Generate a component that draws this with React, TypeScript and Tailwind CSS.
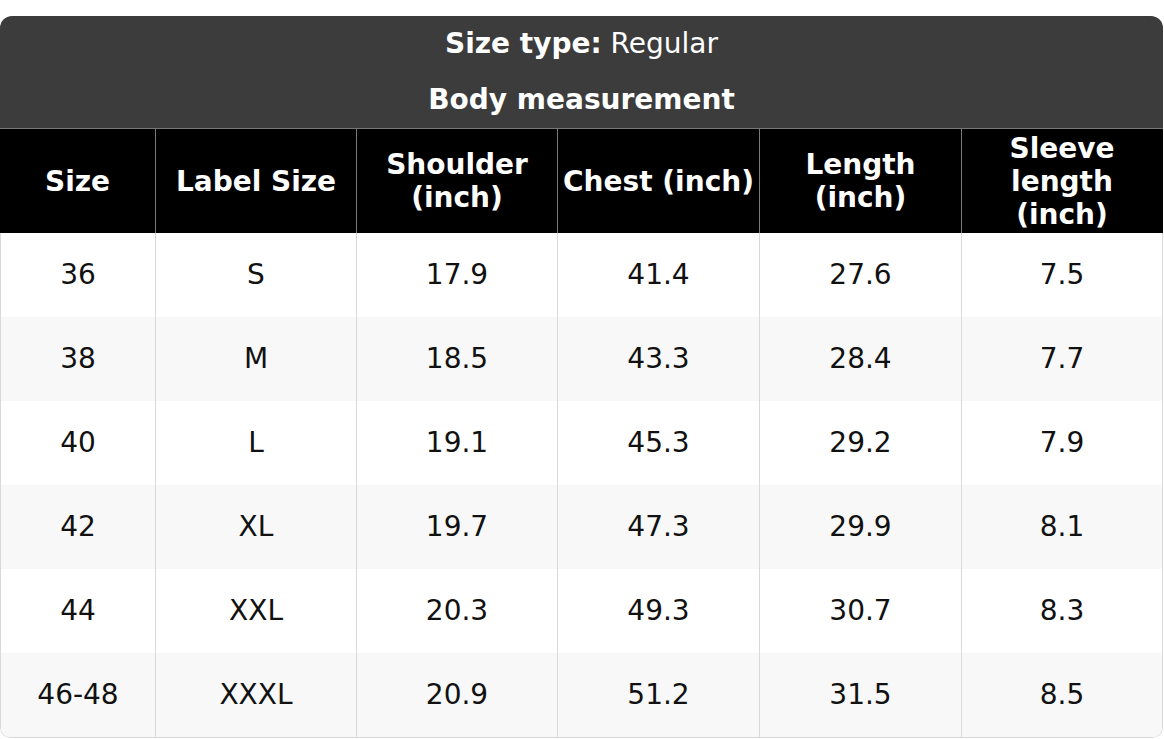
const widths = ["w-[155px]", "w-[201px]", "w-[201px]", "w-[202px]", "w-[202px]", "w-[201px]"];

const headers: string[][] = [
  ["Size"],
  ["Label Size"],
  ["Shoulder", "(inch)"],
  ["Chest (inch)"],
  ["Length", "(inch)"],
  ["Sleeve", "length", "(inch)"],
];

const rows = [
  ["36", "S", "17.9", "41.4", "27.6", "7.5"],
  ["38", "M", "18.5", "43.3", "28.4", "7.7"],
  ["40", "L", "19.1", "45.3", "29.2", "7.9"],
  ["42", "XL", "19.7", "47.3", "29.9", "8.1"],
  ["44", "XXL", "20.3", "49.3", "30.7", "8.3"],
  ["46-48", "XXXL", "20.9", "51.2", "31.5", "8.5"],
];

export default function App() {
  return (
    <div className="min-h-screen bg-white pt-4 font-['DejaVu_Sans',sans-serif] text-[28px]">
      <div className="w-[1163px] overflow-hidden rounded-t-[12px] rounded-b-[10px]">
        {/* title block */}
        <div className="bg-[#3c3c3c] text-white">
          <div className="flex h-[56px] items-center justify-center pb-[2px] leading-[33px]">
            <span className="font-bold">Size type:</span>
            <span>&nbsp;Regular</span>
          </div>
          <div className="flex h-[56px] items-center justify-center pb-[2px] font-bold leading-[33px]">
            Body measurement
          </div>
        </div>

        {/* column headers */}
        <div className="flex h-[105px] border-t border-[#787878] bg-black text-white">
          {headers.map((lines, i) => (
            <div
              key={i}
              className={`${widths[i]} flex shrink-0 flex-col items-center justify-center text-center font-bold leading-[33px] ${
                i > 0 ? "border-l border-[#7a7a7a]" : ""
              }`}
            >
              {lines.map((l) => (
                <span key={l} className="whitespace-nowrap">
                  {l}
                </span>
              ))}
            </div>
          ))}
        </div>

        {/* body */}
        <div className="overflow-hidden rounded-b-[10px] border-x border-b border-[#d9d9d9] text-[#111]">
          {rows.map((r, ri) => (
            <div key={ri} className={`flex h-[84px] ${ri % 2 === 1 ? "bg-[#f8f8f8]" : "bg-white"}`}>
              {r.map((c, ci) => (
                <div
                  key={ci}
                  className={`${ci === 0 ? "w-[154px]" : widths[ci]} flex shrink-0 items-center justify-center ${
                    ci > 0 ? "border-l border-[#d9d9d9]" : ""
                  }`}
                >
                  {c}
                </div>
              ))}
            </div>
          ))}
        </div>
      </div>
    </div>
  );
}
